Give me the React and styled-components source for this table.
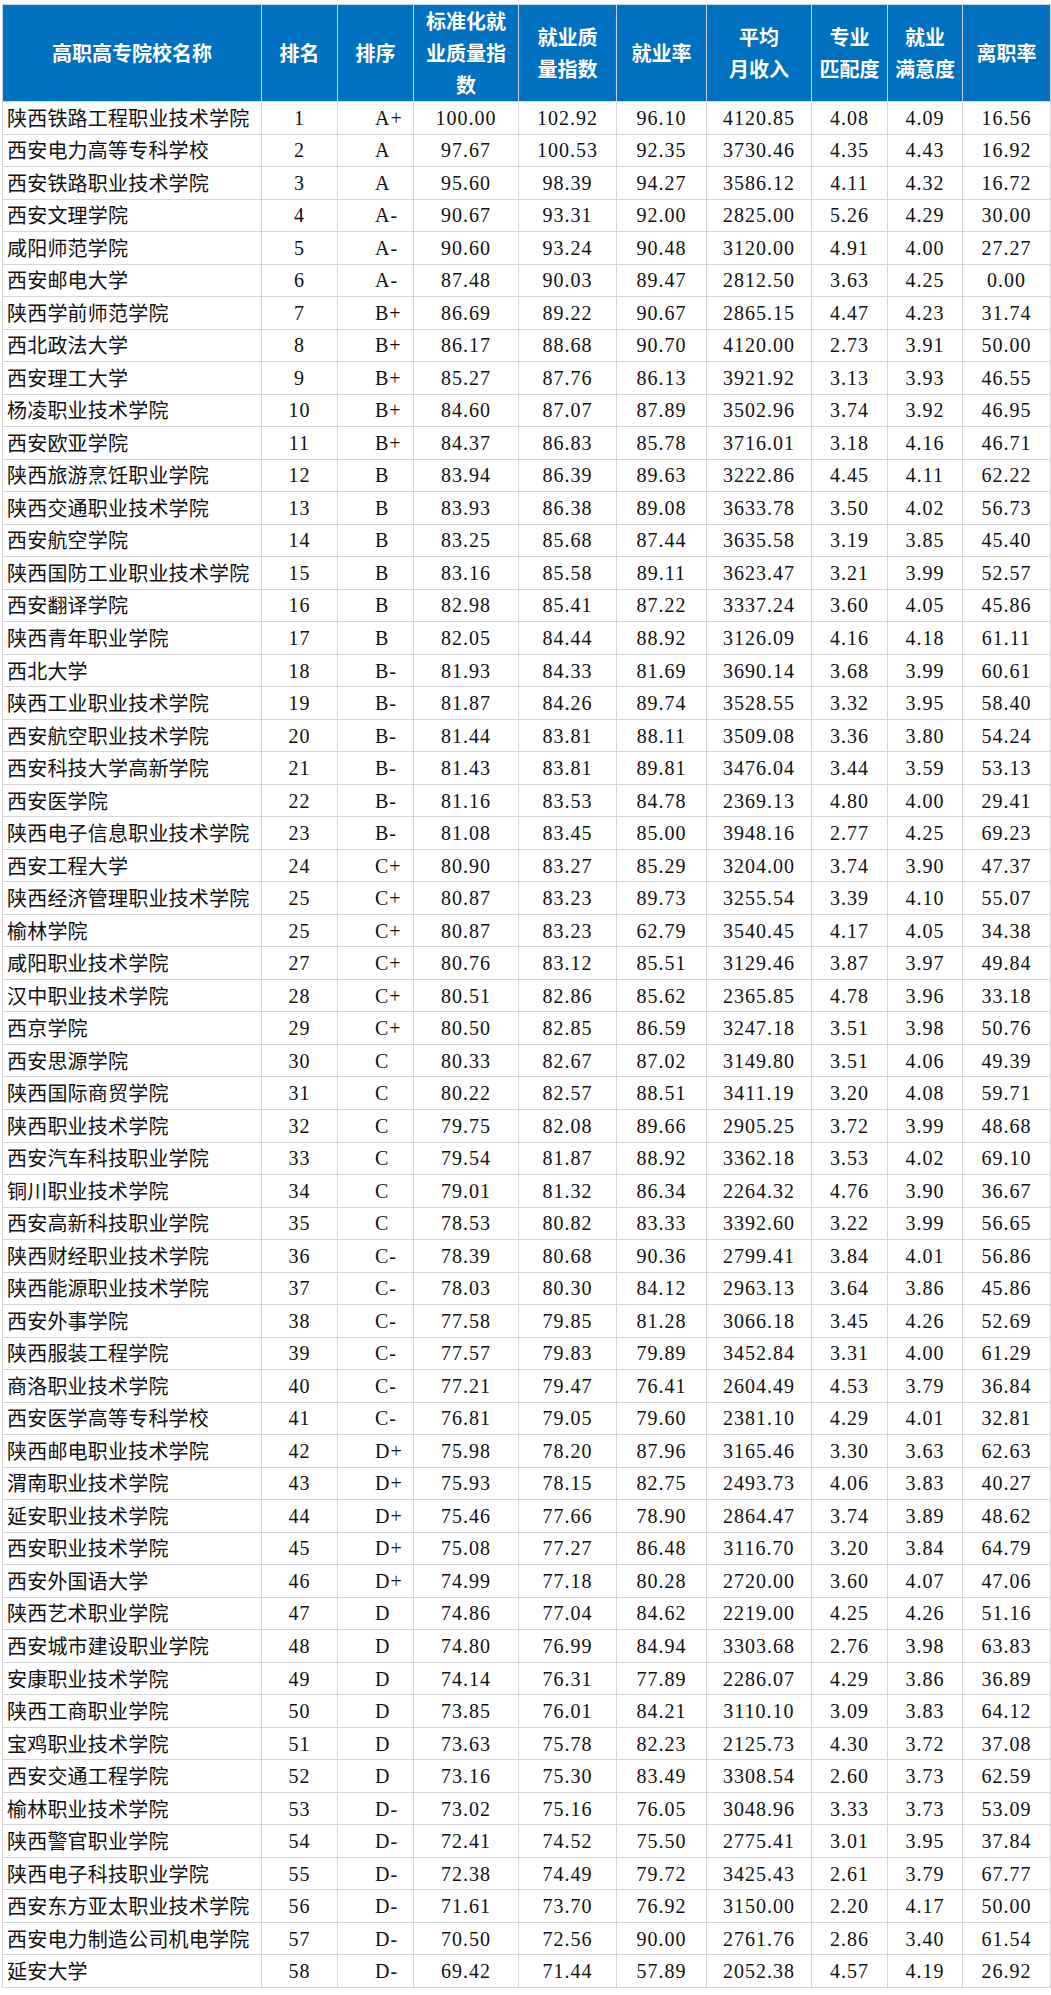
import React from 'react'
import styled, { createGlobalStyle } from 'styled-components'

const GlobalStyle = createGlobalStyle`
  html, body {
    margin: 0;
    padding: 0;
    background: #ffffff;
  }
`

const columns = [
  { title: ['高职高专院校名称'], width: 259 },
  { title: ['排名'], width: 76 },
  { title: ['排序'], width: 76 },
  { title: ['标准化就', '业质量指', '数'], width: 105 },
  { title: ['就业质', '量指数'], width: 98 },
  { title: ['就业率'], width: 90 },
  { title: ['平均', '月收入'], width: 105 },
  { title: ['专业', '匹配度'], width: 76 },
  { title: ['就业', '满意度'], width: 75 },
  { title: ['离职率'], width: 88 },
]

const rows = `陕西铁路工程职业技术学院 1 A+ 100.00 102.92 96.10 4120.85 4.08 4.09 16.56
西安电力高等专科学校 2 A 97.67 100.53 92.35 3730.46 4.35 4.43 16.92
西安铁路职业技术学院 3 A 95.60 98.39 94.27 3586.12 4.11 4.32 16.72
西安文理学院 4 A- 90.67 93.31 92.00 2825.00 5.26 4.29 30.00
咸阳师范学院 5 A- 90.60 93.24 90.48 3120.00 4.91 4.00 27.27
西安邮电大学 6 A- 87.48 90.03 89.47 2812.50 3.63 4.25 0.00
陕西学前师范学院 7 B+ 86.69 89.22 90.67 2865.15 4.47 4.23 31.74
西北政法大学 8 B+ 86.17 88.68 90.70 4120.00 2.73 3.91 50.00
西安理工大学 9 B+ 85.27 87.76 86.13 3921.92 3.13 3.93 46.55
杨凌职业技术学院 10 B+ 84.60 87.07 87.89 3502.96 3.74 3.92 46.95
西安欧亚学院 11 B+ 84.37 86.83 85.78 3716.01 3.18 4.16 46.71
陕西旅游烹饪职业学院 12 B 83.94 86.39 89.63 3222.86 4.45 4.11 62.22
陕西交通职业技术学院 13 B 83.93 86.38 89.08 3633.78 3.50 4.02 56.73
西安航空学院 14 B 83.25 85.68 87.44 3635.58 3.19 3.85 45.40
陕西国防工业职业技术学院 15 B 83.16 85.58 89.11 3623.47 3.21 3.99 52.57
西安翻译学院 16 B 82.98 85.41 87.22 3337.24 3.60 4.05 45.86
陕西青年职业学院 17 B 82.05 84.44 88.92 3126.09 4.16 4.18 61.11
西北大学 18 B- 81.93 84.33 81.69 3690.14 3.68 3.99 60.61
陕西工业职业技术学院 19 B- 81.87 84.26 89.74 3528.55 3.32 3.95 58.40
西安航空职业技术学院 20 B- 81.44 83.81 88.11 3509.08 3.36 3.80 54.24
西安科技大学高新学院 21 B- 81.43 83.81 89.81 3476.04 3.44 3.59 53.13
西安医学院 22 B- 81.16 83.53 84.78 2369.13 4.80 4.00 29.41
陕西电子信息职业技术学院 23 B- 81.08 83.45 85.00 3948.16 2.77 4.25 69.23
西安工程大学 24 C+ 80.90 83.27 85.29 3204.00 3.74 3.90 47.37
陕西经济管理职业技术学院 25 C+ 80.87 83.23 89.73 3255.54 3.39 4.10 55.07
榆林学院 25 C+ 80.87 83.23 62.79 3540.45 4.17 4.05 34.38
咸阳职业技术学院 27 C+ 80.76 83.12 85.51 3129.46 3.87 3.97 49.84
汉中职业技术学院 28 C+ 80.51 82.86 85.62 2365.85 4.78 3.96 33.18
西京学院 29 C+ 80.50 82.85 86.59 3247.18 3.51 3.98 50.76
西安思源学院 30 C 80.33 82.67 87.02 3149.80 3.51 4.06 49.39
陕西国际商贸学院 31 C 80.22 82.57 88.51 3411.19 3.20 4.08 59.71
陕西职业技术学院 32 C 79.75 82.08 89.66 2905.25 3.72 3.99 48.68
西安汽车科技职业学院 33 C 79.54 81.87 88.92 3362.18 3.53 4.02 69.10
铜川职业技术学院 34 C 79.01 81.32 86.34 2264.32 4.76 3.90 36.67
西安高新科技职业学院 35 C 78.53 80.82 83.33 3392.60 3.22 3.99 56.65
陕西财经职业技术学院 36 C- 78.39 80.68 90.36 2799.41 3.84 4.01 56.86
陕西能源职业技术学院 37 C- 78.03 80.30 84.12 2963.13 3.64 3.86 45.86
西安外事学院 38 C- 77.58 79.85 81.28 3066.18 3.45 4.26 52.69
陕西服装工程学院 39 C- 77.57 79.83 79.89 3452.84 3.31 4.00 61.29
商洛职业技术学院 40 C- 77.21 79.47 76.41 2604.49 4.53 3.79 36.84
西安医学高等专科学校 41 C- 76.81 79.05 79.60 2381.10 4.29 4.01 32.81
陕西邮电职业技术学院 42 D+ 75.98 78.20 87.96 3165.46 3.30 3.63 62.63
渭南职业技术学院 43 D+ 75.93 78.15 82.75 2493.73 4.06 3.83 40.27
延安职业技术学院 44 D+ 75.46 77.66 78.90 2864.47 3.74 3.89 48.62
西安职业技术学院 45 D+ 75.08 77.27 86.48 3116.70 3.20 3.84 64.79
西安外国语大学 46 D+ 74.99 77.18 80.28 2720.00 3.60 4.07 47.06
陕西艺术职业学院 47 D 74.86 77.04 84.62 2219.00 4.25 4.26 51.16
西安城市建设职业学院 48 D 74.80 76.99 84.94 3303.68 2.76 3.98 63.83
安康职业技术学院 49 D 74.14 76.31 77.89 2286.07 4.29 3.86 36.89
陕西工商职业学院 50 D 73.85 76.01 84.21 3110.10 3.09 3.83 64.12
宝鸡职业技术学院 51 D 73.63 75.78 82.23 2125.73 4.30 3.72 37.08
西安交通工程学院 52 D 73.16 75.30 83.49 3308.54 2.60 3.73 62.59
榆林职业技术学院 53 D- 73.02 75.16 76.05 3048.96 3.33 3.73 53.09
陕西警官职业学院 54 D- 72.41 74.52 75.50 2775.41 3.01 3.95 37.84
陕西电子科技职业学院 55 D- 72.38 74.49 79.72 3425.43 2.61 3.79 67.77
西安东方亚太职业技术学院 56 D- 71.61 73.70 76.92 3150.00 2.20 4.17 50.00
西安电力制造公司机电学院 57 D- 70.50 72.56 90.00 2761.76 2.86 3.40 61.54
延安大学 58 D- 69.42 71.44 57.89 2052.38 4.57 4.19 26.92`
  .split('\n')
  .map((line) => line.trim().split(' '))

const Page = styled.div`
  padding: 4px 0 0 2px;
`

const Sheet = styled.table`
  border-collapse: collapse;
  table-layout: fixed;
  width: 1048px;
  font-family: "Liberation Serif", "Noto Sans CJK SC", serif;
  font-size: 20px;
  color: #111111;
`

const HeadCell = styled.th`
  height: 96px;
  padding: 0;
  background: #0070c0;
  color: #ffffff;
  border: 1px solid #c7d4e2;
  border-bottom-color: #d4d4d4;
  font-family: "Noto Sans CJK SC", sans-serif;
  font-weight: 700;
  font-size: 20px;
  line-height: 32px;
  text-align: center;
  vertical-align: middle;
`

const Row = styled.tr`
  height: 32.52px;
`

const Cell = styled.td`
  padding: 0;
  border: 1px solid #d6d6d6;
  line-height: 30px;
  white-space: nowrap;
  overflow: hidden;
  letter-spacing: 1px;
  text-align: ${(p) => p.$align || 'center'};
  padding-left: ${(p) => p.$indent || 0}px;
`

const Name = styled(Cell)`
  font-family: "Noto Sans CJK SC", sans-serif;
  letter-spacing: 0.2px;
`

export default function App() {
  return (
    <Page>
      <GlobalStyle />
      <Sheet>
        <colgroup>
          {columns.map((c, i) => (
            <col key={i} style={{ width: c.width }} />
          ))}
        </colgroup>
        <thead>
          <tr>
            {columns.map((c, i) => (
              <HeadCell key={i}>
                {c.title.map((t, j) => (
                  <React.Fragment key={j}>
                    {j > 0 && <br />}
                    {t}
                  </React.Fragment>
                ))}
              </HeadCell>
            ))}
          </tr>
        </thead>
        <tbody>
          {rows.map((r, i) => (
            <Row key={i}>
              <Name $align="left" $indent={4}>{r[0]}</Name>
              <Cell>{r[1]}</Cell>
              <Cell $align="left" $indent={37}>{r[2]}</Cell>
              {r.slice(3).map((v, j) => (
                <Cell key={j}>{v}</Cell>
              ))}
            </Row>
          ))}
        </tbody>
      </Sheet>
    </Page>
  )
}
